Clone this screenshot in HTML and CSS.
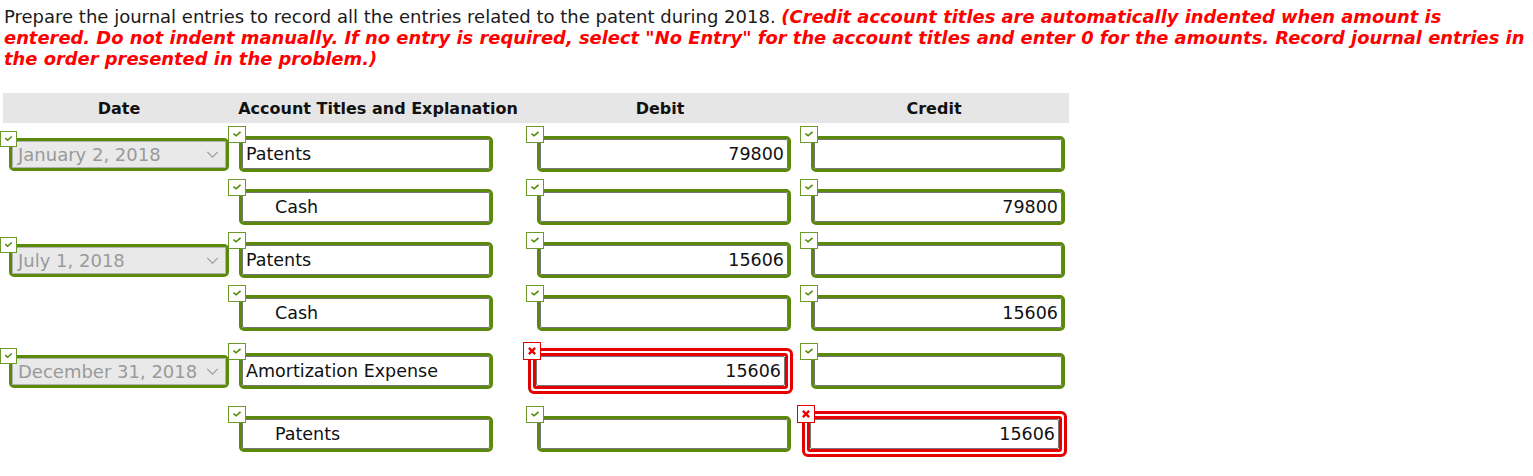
FILE: index.html
```html
<!DOCTYPE html>
<html>
<head>
<meta charset="utf-8">
<link rel="stylesheet" href="styles.css">
</head>
<body>
<p class="instr">Prepare the journal entries to record all the entries related to the patent during 2018. <em class="note">(Credit account titles are automatically indented when amount is<br>entered. Do not indent manually. If no entry is required, select "No Entry" for the account titles and enter 0 for the amounts. Record journal entries in<br>the order presented in the problem.)</em></p>

<div class="journal">
  <div class="head">
    <div>Date</div>
    <div>Account Titles and Explanation</div>
    <div>Debit</div>
    <div>Credit</div>
  </div>

  <div class="row">
    <div class="c-date"><div class="select"><span class="ok sm"><svg viewBox="0 0 17 17"><polyline points="4.5,7.5 7.5,10 12.5,5.5"/></svg></span><div class="sbox"><span>January 2, 2018</span><svg class="chev" viewBox="0 0 14 8"><polyline points="1,1 7,7 13,1"/></svg></div></div></div>
    <div class="c-acct"><div class="field"><span class="ok"><svg viewBox="0 0 17 17"><polyline points="4.5,7.5 7.5,10 12.5,5.5"/></svg></span><div class="box">Patents</div></div></div>
    <div class="c-debit"><div class="field"><span class="ok"><svg viewBox="0 0 17 17"><polyline points="4.5,7.5 7.5,10 12.5,5.5"/></svg></span><div class="box num">79800</div></div></div>
    <div class="c-credit"><div class="field"><span class="ok"><svg viewBox="0 0 17 17"><polyline points="4.5,7.5 7.5,10 12.5,5.5"/></svg></span><div class="box num"></div></div></div>
  </div>

  <div class="row">
    <div class="c-date"></div>
    <div class="c-acct"><div class="field"><span class="ok"><svg viewBox="0 0 17 17"><polyline points="4.5,7.5 7.5,10 12.5,5.5"/></svg></span><div class="box indent">Cash</div></div></div>
    <div class="c-debit"><div class="field"><span class="ok"><svg viewBox="0 0 17 17"><polyline points="4.5,7.5 7.5,10 12.5,5.5"/></svg></span><div class="box num"></div></div></div>
    <div class="c-credit"><div class="field"><span class="ok"><svg viewBox="0 0 17 17"><polyline points="4.5,7.5 7.5,10 12.5,5.5"/></svg></span><div class="box num">79800</div></div></div>
  </div>

  <div class="row">
    <div class="c-date"><div class="select"><span class="ok sm"><svg viewBox="0 0 17 17"><polyline points="4.5,7.5 7.5,10 12.5,5.5"/></svg></span><div class="sbox"><span>July 1, 2018</span><svg class="chev" viewBox="0 0 14 8"><polyline points="1,1 7,7 13,1"/></svg></div></div></div>
    <div class="c-acct"><div class="field"><span class="ok"><svg viewBox="0 0 17 17"><polyline points="4.5,7.5 7.5,10 12.5,5.5"/></svg></span><div class="box">Patents</div></div></div>
    <div class="c-debit"><div class="field"><span class="ok"><svg viewBox="0 0 17 17"><polyline points="4.5,7.5 7.5,10 12.5,5.5"/></svg></span><div class="box num">15606</div></div></div>
    <div class="c-credit"><div class="field"><span class="ok"><svg viewBox="0 0 17 17"><polyline points="4.5,7.5 7.5,10 12.5,5.5"/></svg></span><div class="box num"></div></div></div>
  </div>

  <div class="row">
    <div class="c-date"></div>
    <div class="c-acct"><div class="field"><span class="ok"><svg viewBox="0 0 17 17"><polyline points="4.5,7.5 7.5,10 12.5,5.5"/></svg></span><div class="box indent">Cash</div></div></div>
    <div class="c-debit"><div class="field"><span class="ok"><svg viewBox="0 0 17 17"><polyline points="4.5,7.5 7.5,10 12.5,5.5"/></svg></span><div class="box num"></div></div></div>
    <div class="c-credit"><div class="field"><span class="ok"><svg viewBox="0 0 17 17"><polyline points="4.5,7.5 7.5,10 12.5,5.5"/></svg></span><div class="box num">15606</div></div></div>
  </div>

  <div class="row">
    <div class="c-date"><div class="select"><span class="ok sm"><svg viewBox="0 0 17 17"><polyline points="4.5,7.5 7.5,10 12.5,5.5"/></svg></span><div class="sbox"><span>December 31, 2018</span><svg class="chev" viewBox="0 0 14 8"><polyline points="1,1 7,7 13,1"/></svg></div></div></div>
    <div class="c-acct"><div class="field"><span class="ok"><svg viewBox="0 0 17 17"><polyline points="4.5,7.5 7.5,10 12.5,5.5"/></svg></span><div class="box">Amortization Expense</div></div></div>
    <div class="c-debit"><div class="field wrong"><span class="bad"><svg viewBox="0 0 18 18"><path d="M5.5,5.5 L12.5,12.5 M12.5,5.5 L5.5,12.5"/></svg></span><div class="ring"><div class="box num">15606</div></div></div></div>
    <div class="c-credit"><div class="field"><span class="ok"><svg viewBox="0 0 17 17"><polyline points="4.5,7.5 7.5,10 12.5,5.5"/></svg></span><div class="box num"></div></div></div>
  </div>

  <div class="row">
    <div class="c-date"></div>
    <div class="c-acct"><div class="field"><span class="ok"><svg viewBox="0 0 17 17"><polyline points="4.5,7.5 7.5,10 12.5,5.5"/></svg></span><div class="box indent">Patents</div></div></div>
    <div class="c-debit"><div class="field"><span class="ok"><svg viewBox="0 0 17 17"><polyline points="4.5,7.5 7.5,10 12.5,5.5"/></svg></span><div class="box num"></div></div></div>
    <div class="c-credit"><div class="field wrong"><span class="bad"><svg viewBox="0 0 18 18"><path d="M5.5,5.5 L12.5,12.5 M12.5,5.5 L5.5,12.5"/></svg></span><div class="ring"><div class="box num">15606</div></div></div></div>
  </div>
</div>
</body>
</html>
```

FILE: styles.css
```css
* { box-sizing: border-box; }
body {
  margin: 0;
  padding: 6px 3px 0 3px;
  font-family: "DejaVu Sans", Verdana, sans-serif;
  font-size: 17.5px;
  color: #111;
  background: #fff;
}
.instr {
  margin: 0 0 24px 1px;
  font-size: 18px;
  line-height: 21px;
  white-space: nowrap;
  color: #1a1a1a;
}
.note {
  color: #f00;
  font-weight: bold;
  font-style: italic;
  font-size: 17.9px;
}
.journal { width: 1066px; }
.head, .row {
  display: grid;
  grid-template-columns: 232px 286px 278px 270px;
}
.head {
  background: #e6e6e6;
  height: 30px;
  align-items: center;
  text-align: center;
  font-weight: bold;
  font-size: 16px;
  margin-bottom: 5px;
}
.row {
  align-items: center;
  padding: 8px 0 9px;
}
.c-date { padding-left: 6px; }
.c-acct { padding-left: 4px; }
.c-debit { padding-left: 16px; }
.c-credit { padding-left: 12px; }

.field {
  position: relative;
  width: 254px;
  height: 36px;
  border: 3px solid #5b8a0a;
  border-radius: 5px;
  background: #fff;
}
.box {
  height: 100%;
  border: 1px solid #767676;
  border-radius: 2px;
  padding: 0 4px 0 3px;
  display: flex;
  align-items: center;
  white-space: nowrap;
}
.box.num { justify-content: flex-end; padding-right: 3px; }
.box.indent { padding-left: 32px; }

.field.wrong {
  width: 265px;
  height: 46px;
  margin-left: -9px;
  border: 3px solid #e60000;
  border-radius: 6px;
  padding: 2px;
}
.ring {
  height: 100%;
  border: 3px solid #e60000;
  border-radius: 3px;
}

.ok, .bad {
  position: absolute;
  left: -14px;
  top: -13px;
  width: 18px;
  height: 17px;
  background: #fff;
  border: 1px solid #6b9a2a;
  z-index: 2;
}
.ok svg, .bad svg { display: block; width: 100%; height: 100%; }
.ok svg polyline {
  fill: none;
  stroke: #4f8a00;
  stroke-width: 1.8;
}
.ok.sm { left: -12px; top: -10px; width: 17px; height: 16px; }
.bad {
  border-color: #e60000;
  left: -8px;
  top: -9px;
  width: 18px;
  height: 18px;
}
.bad svg path {
  stroke: #e60000;
  stroke-width: 2.6;
  fill: none;
}

.select {
  position: relative;
  width: 220px;
  height: 33px;
  border: 3px solid #5b8a0a;
  border-radius: 5px;
}
.sbox {
  height: 100%;
  border: 1px solid #b0b0b0;
  background: #e9e9e9;
  color: #9a9a9a;
  font-size: 18px;
  display: flex;
  align-items: center;
  justify-content: space-between;
  padding: 0 6px 0 5px;
  white-space: nowrap;
}
.chev { width: 13px; height: 7px; flex: none; }
.chev polyline { fill: none; stroke: #a0a0a0; stroke-width: 1.5; }
```
